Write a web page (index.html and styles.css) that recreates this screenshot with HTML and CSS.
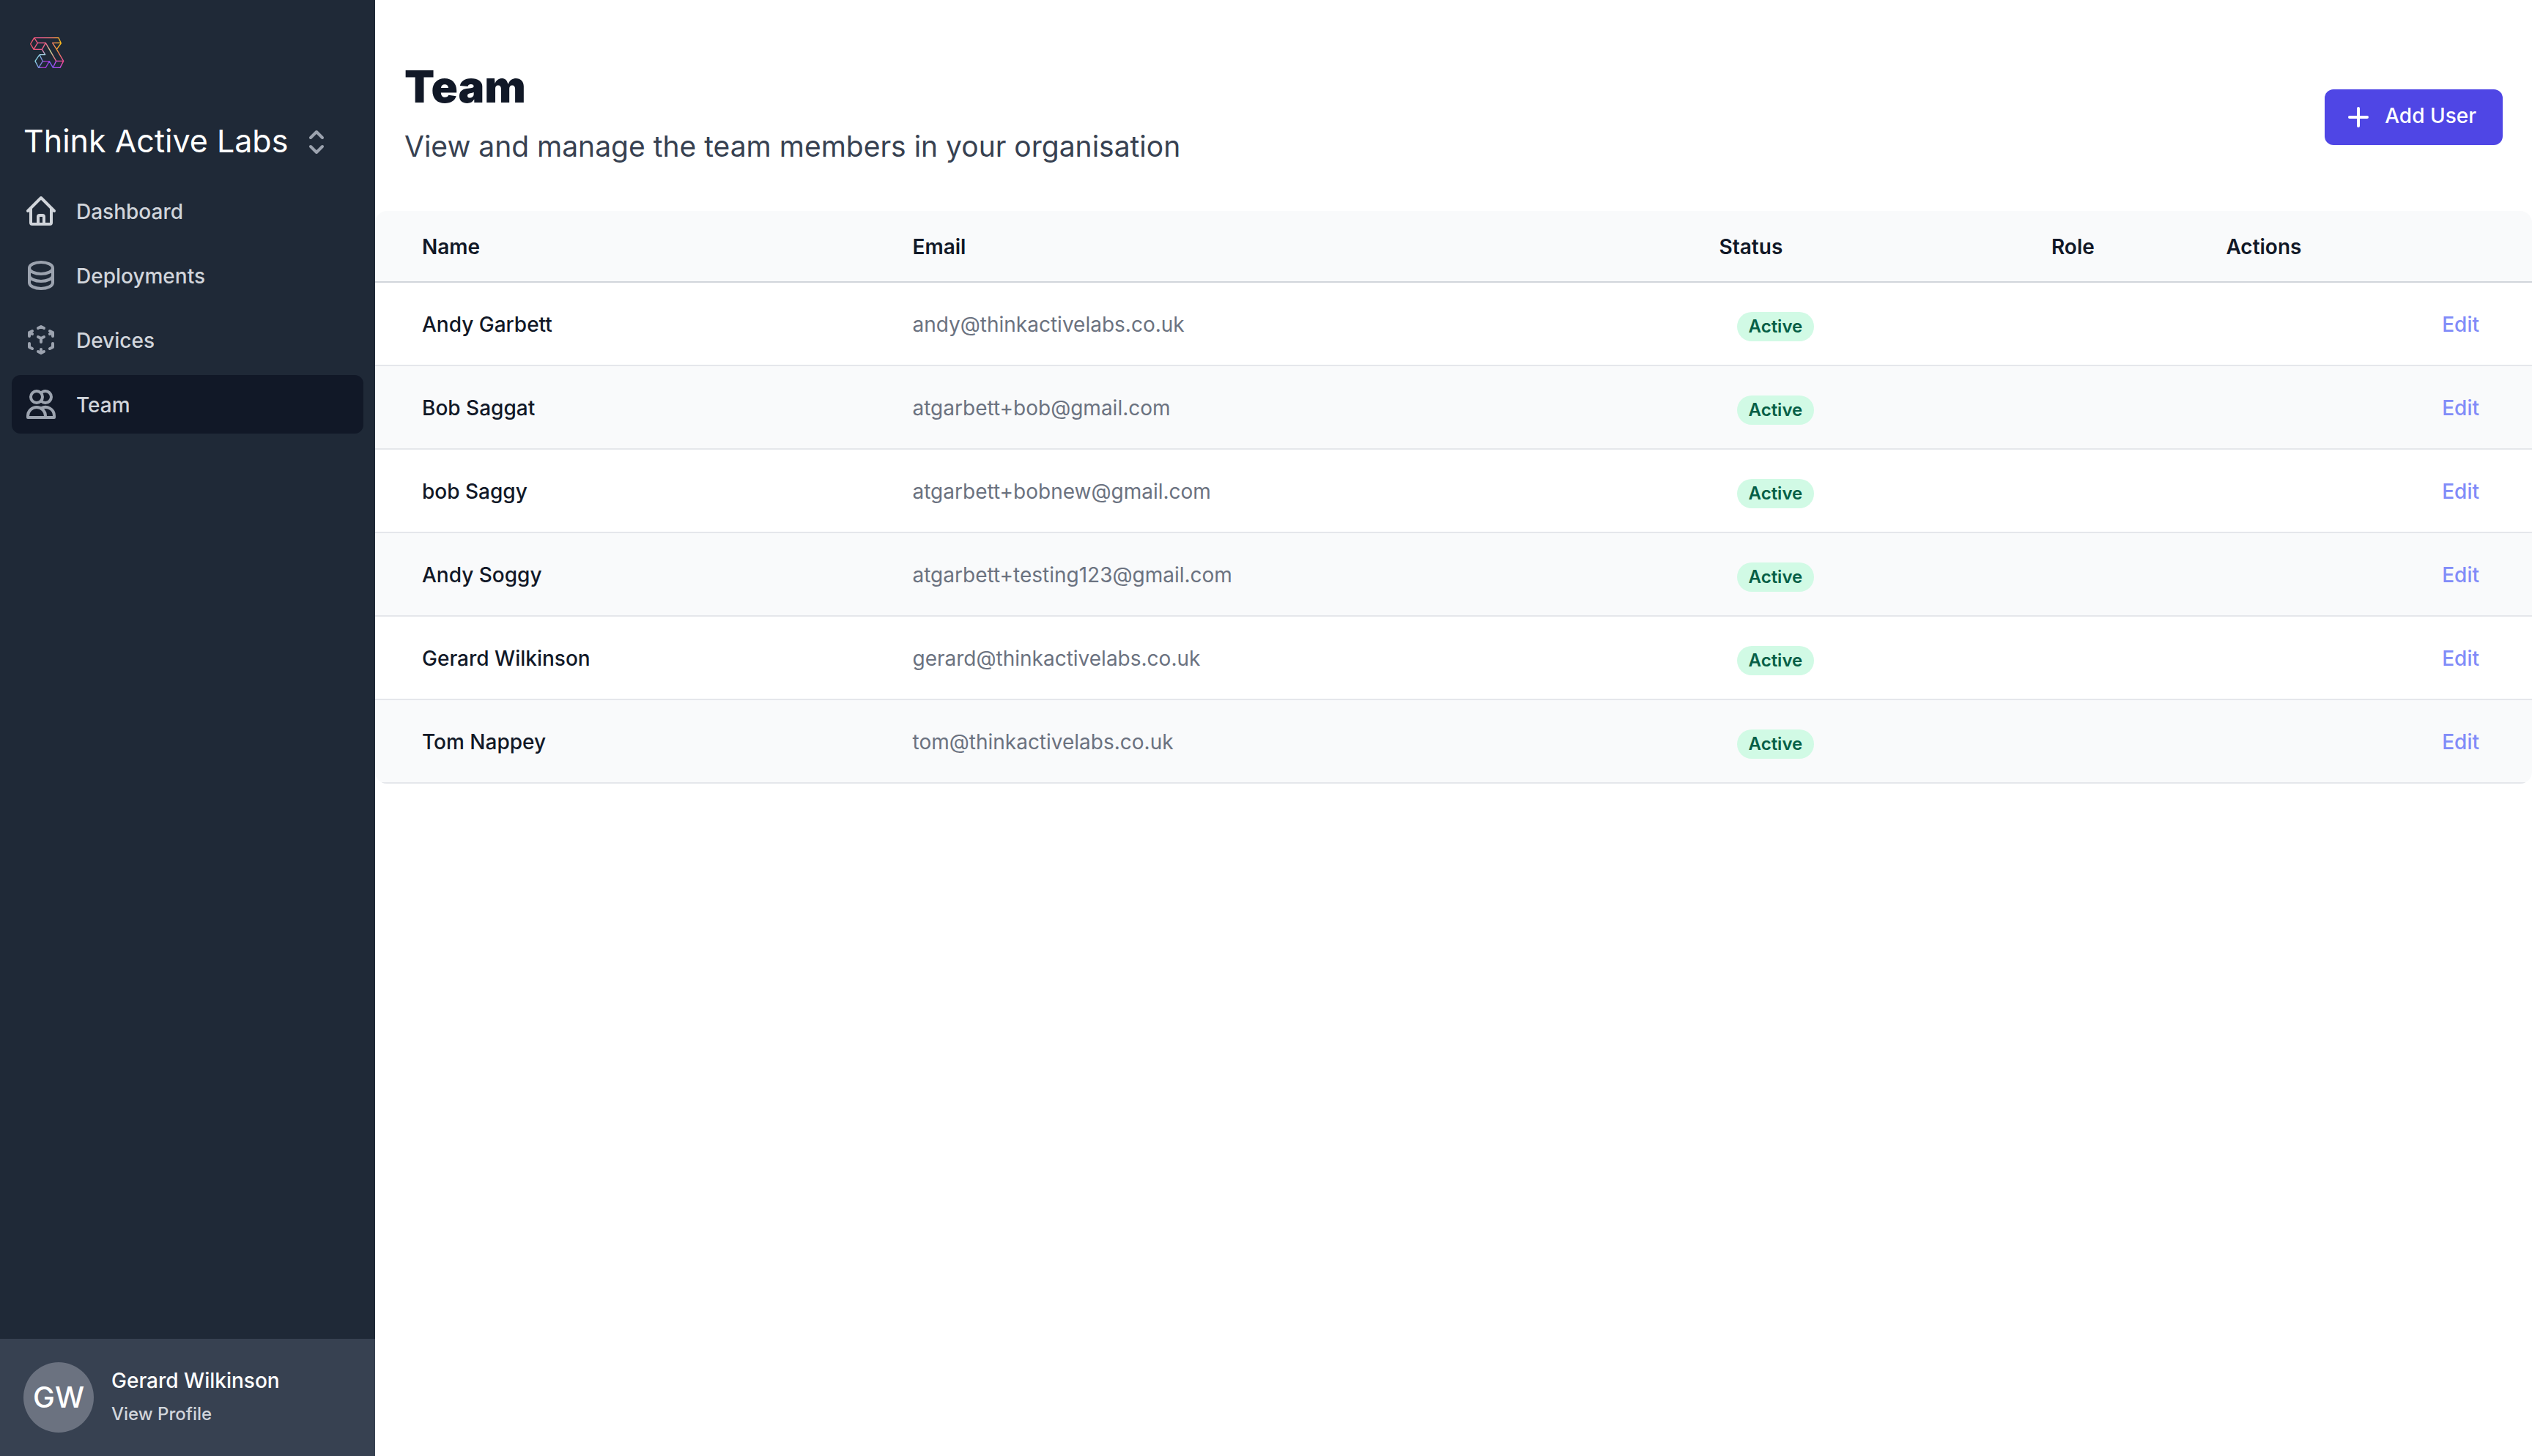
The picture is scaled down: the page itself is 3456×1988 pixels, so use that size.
FILE: index.html
```html
<!DOCTYPE html>
<html lang="en">
<head>
<meta charset="utf-8">
<title>Team</title>
<link rel="stylesheet" href="styles.css">
</head>
<body>
<div class="app">
  <aside class="sidebar">
    <svg class="logo" viewBox="60 60 144 132" fill="none" stroke="url(#spectrum)" stroke-width="4" stroke-linejoin="round" aria-hidden="true">
      <defs>
        <linearGradient id="spectrum" gradientUnits="userSpaceOnUse" x1="65" y1="80" x2="200" y2="80">
          <stop offset="0" stop-color="#f8576b"/><stop offset="0.3" stop-color="#ef5a93"/><stop offset="0.65" stop-color="#f47a6b"/><stop offset="0.9" stop-color="#fbb91f"/>
        </linearGradient>
        <linearGradient id="stem" gradientUnits="userSpaceOnUse" x1="127" y1="86" x2="170" y2="160">
          <stop offset="0" stop-color="#ee5f8c"/><stop offset="0.45" stop-color="#d5e69a"/><stop offset="1" stop-color="#f05a80"/>
        </linearGradient>
        <linearGradient id="side" gradientUnits="userSpaceOnUse" x1="172" y1="112" x2="200" y2="160">
          <stop offset="0" stop-color="#fba02c"/><stop offset="1" stop-color="#ee4ba0"/>
        </linearGradient>
        <linearGradient id="waist" gradientUnits="userSpaceOnUse" x1="112" y1="112" x2="112" y2="136">
          <stop offset="0" stop-color="#ee5f9c"/><stop offset="1" stop-color="#9bdde8"/>
        </linearGradient>
        <linearGradient id="foot" gradientUnits="userSpaceOnUse" x1="84" y1="150" x2="142" y2="175">
          <stop offset="0" stop-color="#8fe6e6"/><stop offset="0.45" stop-color="#7d8be0"/><stop offset="0.75" stop-color="#b321c4"/><stop offset="1" stop-color="#7c5cf0"/>
        </linearGradient>
        <linearGradient id="heel" gradientUnits="userSpaceOnUse" x1="150" y1="187" x2="190" y2="158">
          <stop offset="0" stop-color="#8a4df5"/><stop offset="0.6" stop-color="#c44df0"/><stop offset="1" stop-color="#f04a92"/>
        </linearGradient>
      </defs>
      <path d="M80 65H180L190 87L172 112L155 86H190M80 65L65 90L78 112H112L127 86H94L80 65M94 86L78 112"/>
      <path stroke="url(#stem)" d="M127 86L170 160"/>
      <path stroke="url(#side)" d="M172 112L200 160"/>
      <path stroke="url(#waist)" d="M112 112L125 134H102"/>
      <path stroke="url(#foot)" d="M102 134L84 160L98 187H127L142 161H115L98 187M102 134L115 161M142 161L157 187"/>
      <path stroke="url(#heel)" d="M157 187H186L200 160H170L157 187"/>
    </svg>

    <button class="org" type="button">
      <span>Think Active Labs</span>
      <svg class="icon" viewBox="0 0 24 24" aria-hidden="true"><path d="M8 9l4-4 4 4m0 6l-4 4-4-4"/></svg>
    </button>

    <nav class="nav">
      <a class="nav-item nav-item-lit" href="#dashboard">
        <svg class="icon" viewBox="0 0 24 24" aria-hidden="true"><path d="M3 12l2-2m0 0l7-7 7 7M5 10v10a1 1 0 001 1h12a1 1 0 001-1V10m0 0l2 2M10 21v-5a1 1 0 011-1h2a1 1 0 011 1v5"/></svg>
        <span>Dashboard</span>
      </a>
      <a class="nav-item" href="#deployments">
        <svg class="icon" viewBox="0 0 24 24" aria-hidden="true"><path d="M4 7v10c0 2.21 3.582 4 8 4s8-1.79 8-4V7M4 7c0 2.21 3.582 4 8 4s8-1.79 8-4M4 7c0-2.21 3.582-4 8-4s8 1.79 8 4m0 5c0 2.21-3.582 4-8 4s-8-1.79-8-4"/></svg>
        <span>Deployments</span>
      </a>
      <a class="nav-item" href="#devices">
        <svg class="icon" viewBox="0 0 24 24" aria-hidden="true"><path d="M14 10l-2 1m0 0l-2-1m2 1v2.5M20 7l-2 1m2-1l-2-1m2 1v2.5M14 4l-2-1-2 1M4 7l2-1M4 7l2 1M4 7v2.5M12 21l-2-1m2 1l2-1m-2 1v-2.5M6 18l-2-1v-2.5M18 18l2-1v-2.5"/></svg>
        <span>Devices</span>
      </a>
      <a class="nav-item nav-item-active" href="#team" aria-current="page">
        <svg class="icon" viewBox="0 0 24 24" aria-hidden="true"><path d="M12 4.354a4 4 0 110 5.292M15 21H3v-1a6 6 0 0112 0v1zm0 0h6v-1a6 6 0 00-9-5.197M13 7a4 4 0 11-8 0 4 4 0 018 0z"/></svg>
        <span>Team</span>
      </a>
    </nav>

    <a class="profile" href="#profile">
      <span class="avatar">GW</span>
      <span class="profile-text">
        <span class="profile-name">Gerard Wilkinson</span>
        <span class="profile-link">View Profile</span>
      </span>
    </a>
  </aside>

  <main class="main">
    <header class="page-header">
      <div class="heading">
        <h1>Team</h1>
        <p>View and manage the team members in your organisation</p>
      </div>
      <button class="add" type="button">
        <svg viewBox="0 0 20 20" aria-hidden="true"><path d="M10 4v12M4 10h12"/></svg>
        <span>Add User</span>
      </button>
    </header>

    <table class="team">
      <colgroup>
        <col class="col-name"><col class="col-email"><col class="col-status"><col class="col-role"><col class="col-actions">
      </colgroup>
      <thead>
        <tr><th scope="col">Name</th><th scope="col">Email</th><th scope="col">Status</th><th scope="col">Role</th><th scope="col">Actions</th></tr>
      </thead>
      <tbody>
        <tr><td>Andy Garbett</td><td>andy@thinkactivelabs.co.uk</td><td><span class="badge">Active</span></td><td></td><td><a href="#edit-1">Edit</a></td></tr>
        <tr><td>Bob Saggat</td><td>atgarbett+bob@gmail.com</td><td><span class="badge">Active</span></td><td></td><td><a href="#edit-2">Edit</a></td></tr>
        <tr><td>bob Saggy</td><td>atgarbett+bobnew@gmail.com</td><td><span class="badge">Active</span></td><td></td><td><a href="#edit-3">Edit</a></td></tr>
        <tr><td>Andy Soggy</td><td>atgarbett+testing123@gmail.com</td><td><span class="badge">Active</span></td><td></td><td><a href="#edit-4">Edit</a></td></tr>
        <tr><td>Gerard Wilkinson</td><td>gerard@thinkactivelabs.co.uk</td><td><span class="badge">Active</span></td><td></td><td><a href="#edit-5">Edit</a></td></tr>
        <tr><td>Tom Nappey</td><td>tom@thinkactivelabs.co.uk</td><td><span class="badge">Active</span></td><td></td><td><a href="#edit-6">Edit</a></td></tr>
      </tbody>
    </table>
  </main>
</div>
</body>
</html>
```
FILE: styles.css
```css
* {
  box-sizing: border-box;
}

body {
  margin: 0;
  background: #fff;
  color: #111827;
  font-family: Inter, "Liberation Sans", sans-serif;
  font-size: 28px;
  line-height: 40px;
}

a {
  text-decoration: none;
}

button {
  border: 0;
  font: inherit;
  cursor: pointer;
}

.app {
  display: flex;
  min-height: 100vh;
}

/* Sidebar */

.sidebar {
  display: flex;
  flex: none;
  flex-direction: column;
  width: 512px;
  background: #1f2937;
}

.logo {
  width: 48px;
  height: 44px;
  margin: 50px 40px 0;
}

.org {
  display: flex;
  align-items: center;
  justify-content: space-between;
  width: 424px;
  height: 56px;
  margin: 72px 0 0 32px;
  padding: 0;
  background: none;
  color: #fff;
  font-size: 43px;
  line-height: 56px;
}

.org span {
  padding-bottom: 4px;
}

.icon {
  flex: none;
  width: 48px;
  height: 48px;
  fill: none;
  stroke: #9ca3af;
  stroke-width: 2;
  stroke-linecap: round;
  stroke-linejoin: round;
}

.nav {
  display: flex;
  flex-direction: column;
  flex: 1;
  gap: 8px;
  padding: 26px 16px;
}

.nav-item {
  display: flex;
  align-items: center;
  gap: 24px;
  height: 80px;
  padding: 0 16px;
  border-radius: 12px;
  color: #d1d5db;
  font-weight: 500;
}

.nav-item span {
  padding-top: 2px;
}

.nav-item-lit .icon {
  stroke: #d1d5db;
}

.nav-item-active {
  background: #111827;
}

.profile {
  display: flex;
  align-items: center;
  gap: 24px;
  height: 160px;
  padding: 0 32px;
  background: #374151;
}

.avatar {
  display: flex;
  align-items: center;
  justify-content: center;
  width: 96px;
  height: 96px;
  border-radius: 50%;
  background: #6b7280;
  color: #fff;
  font-size: 40px;
  font-weight: 500;
}

.profile-text {
  display: flex;
  flex-direction: column;
  gap: 6px;
  font-weight: 500;
}

.profile-name {
  color: #fff;
}

.profile-link {
  color: #d1d5db;
  font-size: 24px;
}

/* Page */

.main {
  flex: 1;
  min-width: 0;
}

.page-header {
  display: flex;
  align-items: center;
  justify-content: space-between;
  height: 288px;
  padding: 0 40px;
}

.heading {
  padding-top: 18px;
}

h1 {
  margin: 0;
  font-size: 60px;
  font-weight: 900;
  line-height: 80px;
}

.heading p {
  margin: 14px 0 0;
  color: #374151;
  font-size: 39px;
  line-height: 56px;
}

.add {
  display: flex;
  align-items: center;
  gap: 16px;
  height: 76px;
  margin-top: 32px;
  padding: 0 36px 0 26px;
  border-radius: 12px;
  background: #4f46e5;
  color: #fff;
  font-weight: 500;
}

.add span {
  padding-bottom: 4px;
}

.add svg {
  width: 40px;
  height: 40px;
  stroke: #fff;
  stroke-width: 2;
  stroke-linecap: round;
}

.team {
  width: 100%;
  overflow: hidden;
  border-spacing: 0;
  border-radius: 16px;
  table-layout: fixed;
}

.col-name {
  width: 24.1%;
}

.col-email {
  width: 37.4%;
}

.col-status {
  width: 15.4%;
}

.col-role {
  width: 8.1%;
}

.team th {
  padding: 29px 24px 27px;
  border-bottom: 2px solid #d1d5db;
  background: #f9fafb;
  font-weight: 600;
  text-align: left;
}

.team td {
  height: 114px;
  padding: 2px 24px 0;
  border-bottom: 2px solid #e5e7eb;
  color: #6b7280;
}

.team tr > :first-child {
  padding-left: 64px;
}

.team td:first-child {
  color: #111827;
  font-weight: 500;
}

.team td:nth-child(3) {
  padding-top: 6px;
  padding-left: 48px;
}

.team td:last-child {
  padding-right: 72px;
  text-align: right;
}

.team tbody tr:nth-child(even) {
  background: #f9fafb;
}

.team a {
  color: #818cf8;
  font-weight: 500;
}

.badge {
  display: inline-block;
  padding: 0 16px;
  border-radius: 20px;
  background: #d1fae5;
  color: #065f46;
  font-size: 24px;
  font-weight: 600;
}
```
